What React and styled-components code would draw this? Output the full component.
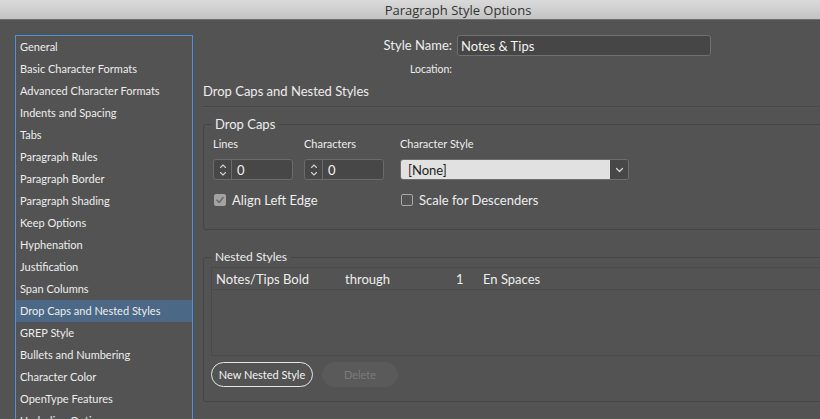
import React from "react";
import styled, { createGlobalStyle } from "styled-components";

const Global = createGlobalStyle`
  html, body { margin: 0; padding: 0; background: #535353; }
  body { font-family: Lato, "Open Sans", sans-serif; }
  * { box-sizing: border-box; }
`;

const Window = styled.div`
  width: 820px;
  height: 419px;
  overflow: hidden;
  background: #535353;
  display: flex;
  flex-direction: column;
`;

const TitleBar = styled.div`
  height: 20px;
  flex: none;
  background: linear-gradient(#dadada, #c3c3c3);
  border-bottom: 1px solid #6e6e6e;
  display: flex;
  align-items: center;
  justify-content: center;
  padding-left: 96px;
  font-family: "Open Sans", sans-serif;
  font-size: 13px;
  color: #333333;
`;

const Body = styled.div`
  flex: 1;
  display: flex;
  align-items: flex-start;
  padding: 15px 0 0 15px;
  gap: 10px;
`;

const Sidebar = styled.ul`
  list-style: none;
  margin: 0;
  padding: 0;
  width: 178px;
  height: 420px;
  flex: none;
  border: 1px solid #4c91d9;
  border-bottom: none;
`;

const Item = styled.li`
  height: 22px;
  display: flex;
  align-items: center;
  padding: 0 0 2px 4px;
  font-size: 11px;
  color: #ededed;
  background: ${(p) => (p.$active ? "#4b6886" : "transparent")};
`;

const Main = styled.div`
  width: 640px;
  flex: none;
  display: flex;
  flex-direction: column;
`;

const FormGrid = styled.div`
  display: grid;
  grid-template-columns: 249px 254px;
  column-gap: 5px;
  row-gap: 7px;
  align-items: center;
`;

const RightLabel = styled.span`
  text-align: right;
  color: #ededed;
  font-size: ${(p) => (p.$small ? "10.5px" : "13px")};
  line-height: 13px;
`;

const TextInput = styled.div`
  height: 21px;
  background: #464646;
  border: 1px solid #707070;
  border-radius: 3px;
  display: flex;
  align-items: center;
  padding-left: 3px;
  color: #f2f2f2;
  font-size: 13px;
`;

const SectionTitle = styled.div`
  margin-top: 8px;
  font-size: 13px;
  color: #ededed;
  height: 14px;
  line-height: 14px;
`;

const Separator = styled.div`
  margin-top: 8px;
  height: 2px;
  border-top: 1px solid #464646;
  border-bottom: 1px solid #585858;
`;

const Group = styled.fieldset`
  margin: ${(p) => p.$mt}px 0 0 0;
  border: 1px solid #454545;
  border-radius: 3px;
  padding: ${(p) => p.$pad};
  min-width: 0;
`;

const Legend = styled.legend`
  padding: 0 ${(p) => p.$pl}px 0 3px;
  margin-left: ${(p) => p.$ml}px;
  font-size: ${(p) => p.$fs}px;
  color: #ededed;
  line-height: 16px;
`;

const CapsGrid = styled.div`
  display: grid;
  grid-template-columns: 91px 96px 229px;
  grid-template-rows: 14px 21px;
  row-gap: 8px;
`;

const CheckRow = styled.div`
  margin-top: 13px;
  display: grid;
  grid-template-columns: 187px 229px;
  height: 14px;
`;

const FieldLabel = styled.span`
  font-size: 11px;
  color: #ededed;
  line-height: 14px;
`;

const Spinner = styled.div`
  width: 80px;
  height: 21px;
  border: 1px solid #6b6b6b;
  border-radius: 3px;
  background: #474747;
  display: flex;
  align-items: stretch;
`;

const SpinArrows = styled.div`
  width: 18px;
  border-right: 1px solid #6b6b6b;
  display: flex;
  align-items: center;
  justify-content: center;
`;

const SpinValue = styled.div`
  display: flex;
  align-items: center;
  padding-left: 5px;
  color: #f2f2f2;
  font-size: 13px;
`;

const Select = styled.div`
  width: 229px;
  height: 21px;
  border: 1px solid #6e6e6e;
  border-radius: 3px;
  display: flex;
  overflow: hidden;
`;

const SelectValue = styled.div`
  flex: 1;
  background: #e1e1e1;
  color: #1f1f1f;
  font-size: 13px;
  display: flex;
  align-items: center;
  padding-left: 7px;
`;

const SelectButton = styled.div`
  width: 18px;
  background: #474747;
  display: flex;
  align-items: center;
  justify-content: center;
`;

const Check = styled.label`
  display: flex;
  align-items: center;
  gap: 6px;
  font-size: 13px;
  line-height: 14px;
  color: #ededed;
  margin-left: 1px;
`;

const Box = styled.span`
  width: 12px;
  height: 12px;
  border-radius: 2px;
  flex: none;
  display: flex;
  align-items: center;
  justify-content: center;
  background: ${(p) => (p.$checked ? "#a3a3a3" : "transparent")};
  border: 1px solid ${(p) => (p.$checked ? "#a3a3a3" : "#a8a8a8")};
`;

const Table = styled.div`
  height: 89px;
  border: 1px solid #4a4a4a;
  border-right: none;
`;

const Row = styled.div`
  height: 22px;
  display: grid;
  grid-template-columns: 129px 111px 27px 1fr;
  align-items: center;
  padding-left: 4px;
  border-bottom: 1px solid #4a4a4a;
  font-size: 13px;
  color: #ededed;
`;

const Buttons = styled.div`
  margin-top: 6px;
  display: flex;
  gap: 9px;
`;

const Button = styled.div`
  height: 25px;
  width: ${(p) => p.$w}px;
  border-radius: 13px;
  display: flex;
  align-items: center;
  justify-content: center;
  font-size: 11px;
  color: ${(p) => (p.$disabled ? "#7c7c7c" : "#f4f4f4")};
  background: ${(p) => (p.$disabled ? "#5a5a5a" : "transparent")};
  border: 1px solid ${(p) => (p.$disabled ? "#5a5a5a" : "#e6e6e6")};
`;

const items = [
  "General",
  "Basic Character Formats",
  "Advanced Character Formats",
  "Indents and Spacing",
  "Tabs",
  "Paragraph Rules",
  "Paragraph Border",
  "Paragraph Shading",
  "Keep Options",
  "Hyphenation",
  "Justification",
  "Span Columns",
  "Drop Caps and Nested Styles",
  "GREP Style",
  "Bullets and Numbering",
  "Character Color",
  "OpenType Features",
  "Underline Options",
];

const UpDown = () => (
  <svg width="10" height="16" viewBox="0 0 10 16" fill="none" stroke="#cfcfcf" strokeWidth="1.1" strokeLinecap="round" strokeLinejoin="round">
    <path d="M2.5 5.5 L5 3 L7.5 5.5" />
    <path d="M2.5 10.5 L5 13 L7.5 10.5" />
  </svg>
);

const Chevron = () => (
  <svg width="9" height="6" viewBox="0 0 9 6" fill="none" stroke="#d8d8d8" strokeWidth="1.2" strokeLinecap="round" strokeLinejoin="round">
    <path d="M1.5 1.5 L4.5 4.5 L7.5 1.5" />
  </svg>
);

const Tick = () => (
  <svg width="10" height="10" viewBox="0 0 10 10" fill="none" stroke="#6a6a6a" strokeWidth="1.6" strokeLinecap="round" strokeLinejoin="round">
    <path d="M2 5.2 L4.2 7.4 L8 2.6" />
  </svg>
);

const NumberField = () => (
  <Spinner>
    <SpinArrows>
      <UpDown />
    </SpinArrows>
    <SpinValue>0</SpinValue>
  </Spinner>
);

export default function App() {
  return (
    <>
      <Global />
      <Window>
        <TitleBar>Paragraph Style Options</TitleBar>
        <Body>
          <Sidebar>
            {items.map((t) => (
              <Item key={t} $active={t === "Drop Caps and Nested Styles"}>
                {t}
              </Item>
            ))}
          </Sidebar>
          <Main>
            <FormGrid>
              <RightLabel>Style Name:</RightLabel>
              <TextInput>Notes &amp; Tips</TextInput>
              <RightLabel $small>Location:</RightLabel>
              <span />
            </FormGrid>
            <SectionTitle>Drop Caps and Nested Styles</SectionTitle>
            <Separator />
            <Group $mt={8} $pad="5px 0 22px 9px">
              <Legend $ml={-1} $pl={4} $fs={13}>
                Drop Caps
              </Legend>
              <CapsGrid>
                <FieldLabel>Lines</FieldLabel>
                <FieldLabel>Characters</FieldLabel>
                <FieldLabel>Character Style</FieldLabel>
                <NumberField />
                <NumberField />
                <Select>
                  <SelectValue>[None]</SelectValue>
                  <SelectButton>
                    <Chevron />
                  </SelectButton>
                </Select>
              </CapsGrid>
              <CheckRow>
                <Check>
                  <Box $checked>
                    <Tick />
                  </Box>
                  Align Left Edge
                </Check>
                <Check>
                  <Box />
                  Scale for Descenders
                </Check>
              </CheckRow>
            </Group>
            <Group $mt={19} $pad="2px 0 14px 7px">
              <Legend $ml={1} $pl={4} $fs={12}>
                Nested Styles
              </Legend>
              <Table>
                <Row>
                  <span>Notes/Tips Bold</span>
                  <span>through</span>
                  <span>1</span>
                  <span>En Spaces</span>
                </Row>
              </Table>
              <Buttons>
                <Button $w={102}>New Nested Style</Button>
                <Button $w={76} $disabled>
                  Delete
                </Button>
              </Buttons>
            </Group>
          </Main>
        </Body>
      </Window>
    </>
  );
}
